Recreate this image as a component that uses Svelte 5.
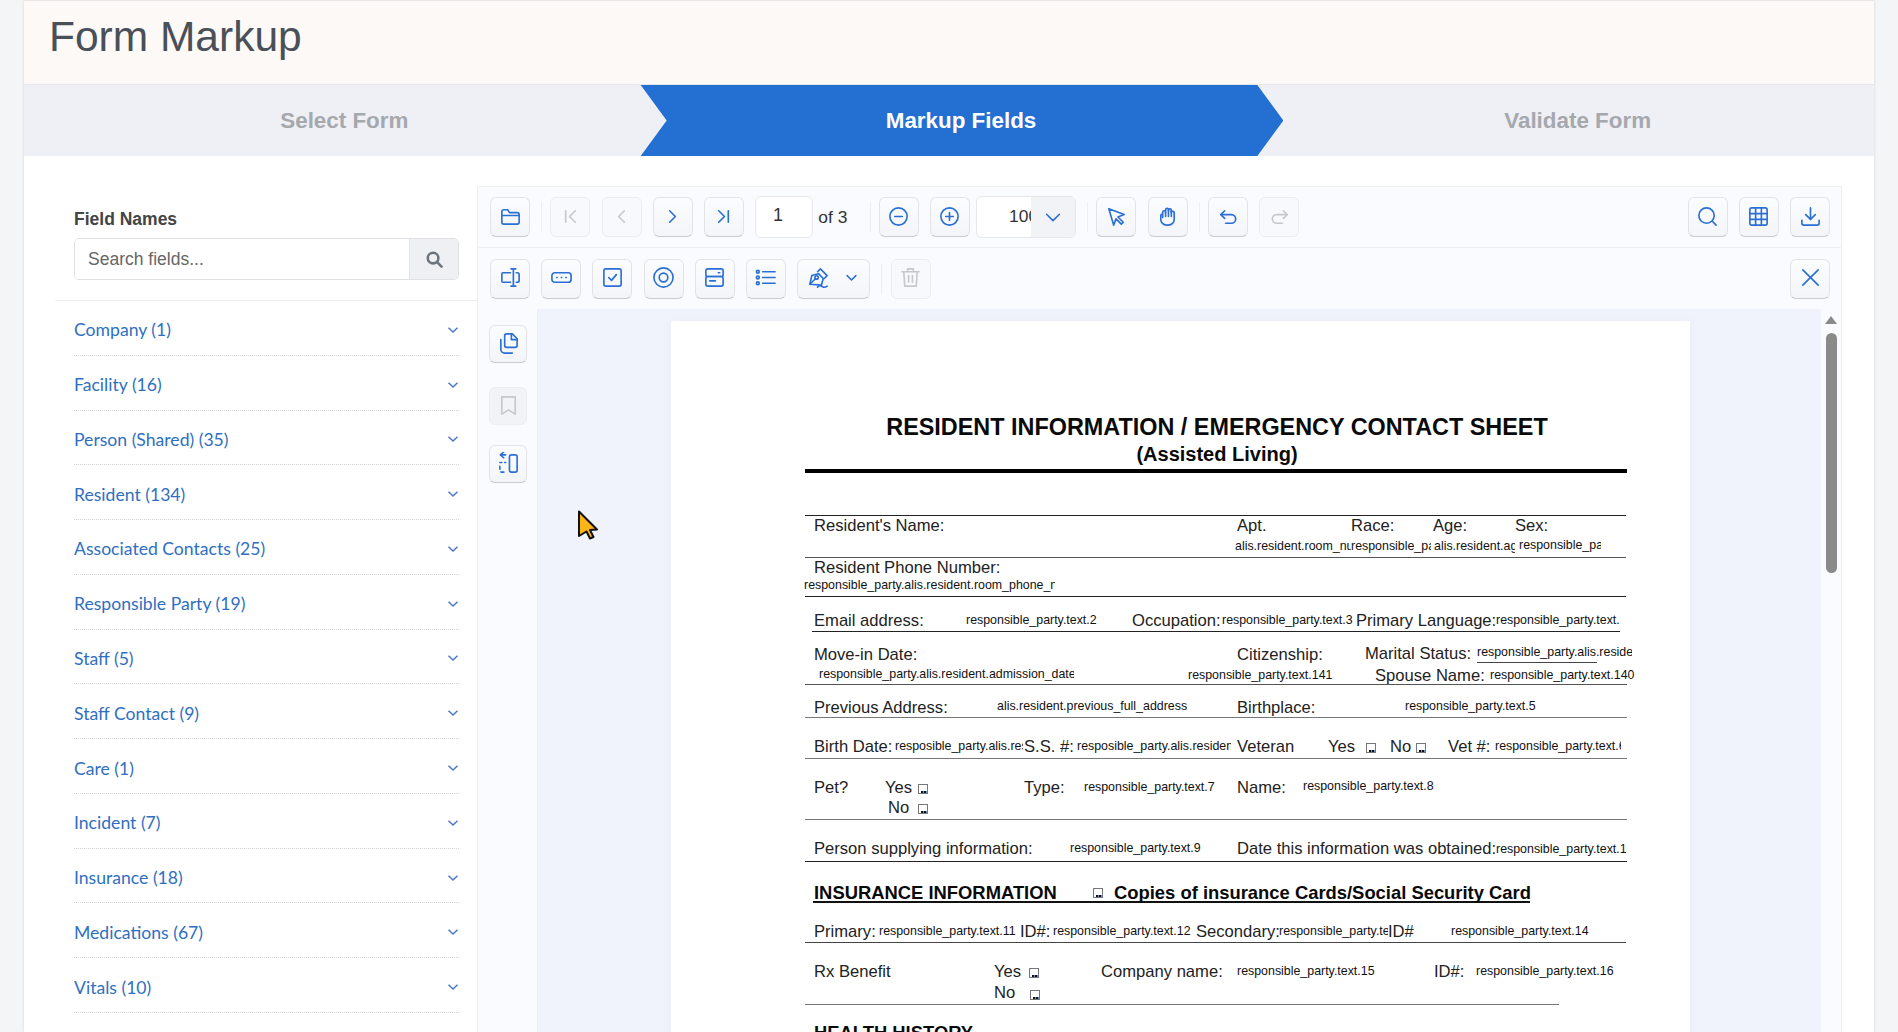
<script lang="ts">
  const PAGE_X = 671;
  const PAGE_Y = 321;

  const groups = [
    "Company (1)",
    "Facility (16)",
    "Person (Shared) (35)",
    "Resident (134)",
    "Associated Contacts (25)",
    "Responsible Party (19)",
    "Staff (5)",
    "Staff Contact (9)",
    "Care (1)",
    "Incident (7)",
    "Insurance (18)",
    "Medications (67)",
    "Vitals (10)",
  ];

  const icons: Record<string, string> = {
    folder: '<path d="M3 7a2 2 0 0 1 2-2h4l2 3h8a2 2 0 0 1 2 2v8a2 2 0 0 1-2 2H5a2 2 0 0 1-2-2z"/><path d="M3 11h18"/>',
    first: '<path d="M7 6v12"/><path d="M17 6l-6 6 6 6"/>',
    prev: '<path d="M15 6l-6 6 6 6"/>',
    next: '<path d="M9 6l6 6-6 6"/>',
    last: '<path d="M7 6l6 6-6 6"/><path d="M17 6v12"/>',
    minus: '<circle cx="12" cy="12" r="9"/><path d="M8 12h8"/>',
    plus: '<circle cx="12" cy="12" r="9"/><path d="M8 12h8"/><path d="M12 8v8"/>',
    down: '<path d="M5 9l7 7 7-7"/>',
    pointer: '<path d="M4 4l16 6-6.5 2.5L19 18l-2 2-5.5-5.5L9 21z"/>',
    hand: '<path d="M7 13V7.5a1.5 1.5 0 0 1 3 0V5a1.5 1.5 0 0 1 3 0v.5a1.5 1.5 0 0 1 3 0V8a1.5 1.5 0 0 1 3 0v7a6 6 0 0 1-6 6h-2a6 6 0 0 1-6-6v-4a1.5 1.5 0 0 1 2-1.4"/><path d="M10 7.5V12"/><path d="M13 5.5V12"/><path d="M16 6v6"/>',
    undo: '<path d="M8 6l-4 4 4 4"/><path d="M4 10h11a4.5 4.5 0 0 1 0 9H9"/>',
    redo: '<path d="M16 6l4 4-4 4"/><path d="M20 10H9a4.5 4.5 0 0 0 0 9h6"/>',
    search: '<circle cx="11" cy="11" r="8"/><path d="M17 17l4 4"/>',
    table: '<rect x="3" y="3" width="18" height="18" rx="2"/><path d="M3 9h18"/><path d="M3 15h18"/><path d="M9 3v18"/><path d="M15 3v18"/>',
    download: '<path d="M12 3v12"/><path d="M7 10l5 5 5-5"/><path d="M3 16v3a2 2 0 0 0 2 2h14a2 2 0 0 0 2-2v-3"/>',
    close: '<path d="M4 4l16 16"/><path d="M20 4L4 20"/>',
    textbox: '<path d="M12 7H4a1 1 0 0 0-1 1v8a1 1 0 0 0 1 1h8"/><path d="M18 7h1a2 2 0 0 1 2 2v6a2 2 0 0 1-2 2h-1"/><path d="M15 3v18"/><path d="M12.5 3h5"/><path d="M12.5 21h5"/>',
    dots: '<rect x="2" y="7" width="20" height="10" rx="3"/><path d="M7 12h.5"/><path d="M11.8 12h.5"/><path d="M16.5 12h.5"/>',
    check: '<rect x="3" y="3" width="18" height="18" rx="2"/><path d="M8 12l3 3 5-6"/>',
    radio: '<circle cx="12" cy="12" r="10"/><circle cx="12" cy="12" r="4.5"/>',
    combo: '<rect x="3" y="3" width="18" height="8" rx="2"/><rect x="3" y="11" width="18" height="10" rx="2"/><path d="M7 15.5h6"/><path d="M16 7h1.5"/>',
    list: '<circle cx="4" cy="6" r="1.5"/><circle cx="4" cy="12" r="1.5"/><circle cx="4" cy="18" r="1.5"/><path d="M9 6h13"/><path d="M9 12h13"/><path d="M9 18h13"/>',
    pen: '<path d="M3 19l2-9 7-2 5 5-2 7z"/><path d="M3 19l6-6"/><circle cx="10" cy="12" r="1.8"/><path d="M11 6l3-3 7 7-3 3"/><path d="M11 22c2-2 3-2 5-.5s3 1 5-.5"/>',
    trash: '<path d="M3 6h18"/><path d="M9 6V3h6v3"/><path d="M5 6l1 15h12l1-15"/><path d="M10 10v7"/><path d="M14 10v7"/>',
    pages: '<path d="M8 4a2 2 0 0 1 2-2h6l5 5v7a2 2 0 0 1-2 2h-9a2 2 0 0 1-2-2z"/><path d="M15 2v6h6"/><path d="M4 8v10a4 4 0 0 0 4 4h8"/>',
    bookmark: '<path d="M5 3h14v18l-7-4.5L5 21z"/>',
    panel: '<rect x="13" y="3" width="8" height="18" rx="2"/><path d="M9 3H4"/><path d="M7 1L3.5 4 7 7" transform="translate(0 -1)"/><path d="M3 11h2"/><path d="M8 11h1"/><path d="M3 15v4a2 2 0 0 0 2 2h4" stroke-dasharray="3 3"/>',
  };

  type Tool = { icon: string; off?: boolean };
  const pageNav: Tool[] = [
    { icon: "first", off: true },
    { icon: "prev", off: true },
    { icon: "next" },
    { icon: "last" },
  ];
  const fieldTools = ["textbox", "dots", "check", "radio", "combo", "list"];

  const lines = [
    { x: 805, y: 515, w: 821, h: 1, c: "#222" },
    { x: 805, y: 557, w: 821, h: 1, c: "#555" },
    { x: 805, y: 596, w: 821, h: 1, c: "#222" },
    { x: 812, y: 631, w: 808, h: 1, c: "#222" },
    { x: 1477, y: 662, w: 120, h: 1, c: "#444" },
    { x: 805, y: 684, w: 822, h: 1, c: "#555" },
    { x: 805, y: 717, w: 822, h: 1, c: "#777" },
    { x: 805, y: 758, w: 822, h: 1, c: "#777" },
    { x: 805, y: 819, w: 822, h: 1, c: "#777" },
    { x: 805, y: 861, w: 822, h: 1, c: "#222" },
    { x: 813, y: 901, w: 717, h: 2, c: "#111" },
    { x: 805, y: 942, w: 821, h: 1, c: "#444" },
    { x: 805, y: 1004, w: 754, h: 1, c: "#777" },
  ];

  // label text on the sheet: x, vertical centre, text
  const labels: [number, number, string][] = [
    [814, 526, "Resident's Name:"],
    [1237, 526, "Apt."],
    [1351, 526, "Race:"],
    [1433, 526, "Age:"],
    [1515, 526, "Sex:"],
    [814, 568, "Resident Phone Number:"],
    [814, 621, "Email address:"],
    [1132, 621, "Occupation:"],
    [1356, 621, "Primary Language:"],
    [814, 655, "Move-in Date:"],
    [1237, 655, "Citizenship:"],
    [1365, 654, "Marital Status:"],
    [1375, 676, "Spouse Name:"],
    [814, 708, "Previous Address:"],
    [1237, 708, "Birthplace:"],
    [814, 747, "Birth Date:"],
    [1024, 747, "S.S. #:"],
    [1237, 747, "Veteran"],
    [1328, 747, "Yes"],
    [1390, 747, "No"],
    [1448, 747, "Vet #:"],
    [814, 788, "Pet?"],
    [885, 788, "Yes"],
    [888, 808, "No"],
    [1024, 788, "Type:"],
    [1237, 788, "Name:"],
    [814, 849, "Person supplying information:"],
    [1237, 849, "Date this information was obtained:"],
    [814, 932, "Primary:"],
    [1020, 932, "ID#:"],
    [1196, 932, "Secondary:"],
    [1388, 932, "ID#"],
    [814, 972, "Rx Benefit"],
    [994, 972, "Yes"],
    [994, 993, "No"],
    [1101, 972, "Company name:"],
    [1434, 972, "ID#:"],
  ];

  // overlaid field names: x, vertical centre, text, clip width
  const fields: [number, number, string, number][] = [
    [1235, 546, "alis.resident.room_number", 116],
    [1351, 546, "responsible_party.alis", 80],
    [1434, 546, "alis.resident.age", 81],
    [1519, 545, "responsible_party.alis", 82],
    [804, 585, "responsible_party.alis.resident.room_phone_number", 251],
    [966, 620, "responsible_party.text.2", 150],
    [1222, 620, "responsible_party.text.3", 134],
    [1496, 620, "responsible_party.text.4", 123],
    [1477, 652, "responsible_party.alis.resident", 155],
    [819, 674, "responsible_party.alis.resident.admission_date", 255],
    [1188, 675, "responsible_party.text.141", 150],
    [1490, 675, "responsible_party.text.140", 145],
    [997, 706, "alis.resident.previous_full_address", 200],
    [1405, 706, "responsible_party.text.5", 150],
    [895, 746, "resposible_party.alis.resident", 128],
    [1077, 746, "resposible_party.alis.resident", 154],
    [1495, 746, "responsible_party.text.6", 126],
    [1084, 787, "responsible_party.text.7", 150],
    [1303, 786, "responsible_party.text.8", 150],
    [1070, 848, "responsible_party.text.9", 150],
    [1496, 849, "responsible_party.text.10", 130],
    [879, 931, "responsible_party.text.11", 140],
    [1053, 931, "responsible_party.text.12", 140],
    [1279, 931, "responsible_party.text.13", 109],
    [1451, 931, "responsible_party.text.14", 150],
    [1237, 971, "responsible_party.text.15", 150],
    [1476, 971, "responsible_party.text.16", 150],
  ];

  const boxes: [number, number][] = [
    [1366, 743],
    [1416, 743],
    [918, 784],
    [918, 804],
    [1093, 888],
    [1029, 968],
    [1030, 990],
  ];
</script>

{#snippet icon(name: string, size = 23)}
  <svg class="icon" width={size} height={size} viewBox="0 0 24 24" fill="none" stroke="currentColor" stroke-width="1.7" stroke-linecap="round" stroke-linejoin="round">
    {@html icons[name]}
  </svg>
{/snippet}

{#snippet tool(name: string, off = false)}
  <button class="tool" class:off>{@render icon(name)}</button>
{/snippet}

<div class="card">
  <header class="title-bar"><h1>Form Markup</h1></header>

  <nav class="stepper">
    <div class="step">Select Form</div>
    <div class="step active"><span>Markup Fields</span></div>
    <div class="step">Validate Form</div>
  </nav>

  <div class="body">
    <aside class="sidebar">
      <div class="search-block">
        <label for="field-search">Field Names</label>
        <div class="search">
          <input id="field-search" placeholder="Search fields..." />
          <button aria-label="Search">
            <svg width="17" height="17" viewBox="0 0 24 24" fill="none" stroke="#6c757d" stroke-width="3.6" stroke-linecap="round"><circle cx="10" cy="10" r="7.5" /><path d="M16 16l6 6" /></svg>
          </button>
        </div>
      </div>
      <ul class="groups">
        {#each groups as group}
          <li>
            <span>{group}</span>
            <svg width="12" height="12" viewBox="0 0 12 12" fill="none" stroke="#4a78c4" stroke-width="1.5"><path d="M1.5 3.8 6 8l4.5-4.2" /></svg>
          </li>
        {/each}
      </ul>
    </aside>

    <section class="viewer">
      <div class="toolbar">
        {@render tool("folder")}
        <i class="sep"></i>
        {#each pageNav as t}
          {@render tool(t.icon, t.off)}
        {/each}
        <div class="page-input">1</div>
        <span class="page-count">of 3</span>
        <i class="sep"></i>
        {@render tool("minus")}
        {@render tool("plus")}
        <div class="zoom-select">
          <span class="zoom-value"><span>100%</span></span>
          <span class="zoom-arrow">{@render icon("down", 22)}</span>
        </div>
        <i class="sep"></i>
        {@render tool("pointer")}
        {@render tool("hand")}
        <i class="sep"></i>
        {@render tool("undo")}
        {@render tool("redo", true)}
        <div class="push"></div>
        {@render tool("search")}
        {@render tool("table")}
        {@render tool("download")}
      </div>

      <div class="toolbar second">
        {#each fieldTools as t}
          {@render tool(t)}
        {/each}
        <button class="tool sign">
          {@render icon("pen")}
          <svg width="15" height="15" viewBox="0 0 24 24" fill="none" stroke="currentColor" stroke-width="2.4" stroke-linecap="round" stroke-linejoin="round"><path d="M5 9l7 7 7-7" /></svg>
        </button>
        <i class="sep"></i>
        {@render tool("trash", true)}
        <div class="push"></div>
        {@render tool("close")}
      </div>

      <div class="workspace">
        <div class="rail">
          {@render tool("pages")}
          {@render tool("bookmark", true)}
          {@render tool("panel")}
        </div>
        <div class="canvas">
          <article class="sheet">
            <h2>RESIDENT INFORMATION / EMERGENCY CONTACT SHEET</h2>
            <h3>(Assisted Living)</h3>
            <div class="rule"></div>
            {#each lines as l}
              <div class="line" style="left:{l.x - PAGE_X}px;top:{l.y - PAGE_Y}px;width:{l.w}px;height:{l.h}px;background:{l.c}"></div>
            {/each}
            {#each labels as [x, y, text]}
              <span class="label" style="left:{x - PAGE_X}px;top:{y - PAGE_Y - 10}px">{text}</span>
            {/each}
            {#each fields as [x, y, text, w]}
              <span class="field" style="left:{x - PAGE_X}px;top:{y - PAGE_Y - 10}px;width:{w}px">{text}</span>
            {/each}
            {#each boxes as [x, y]}
              <span class="box" style="left:{x - PAGE_X}px;top:{y - PAGE_Y}px"></span>
            {/each}
            <b class="heading" style="left:{814 - PAGE_X}px;top:{893 - PAGE_Y - 10}px">INSURANCE INFORMATION</b>
            <b class="heading" style="left:{1114 - PAGE_X}px;top:{893 - PAGE_Y - 10}px">Copies of insurance Cards/Social Security Card</b>
            <b class="heading" style="left:{814 - PAGE_X}px;top:{1033 - PAGE_Y - 10}px">HEALTH HISTORY</b>
          </article>
        </div>
        <div class="scrollbar">
          <i class="arrow"></i>
          <i class="thumb"></i>
        </div>
        <svg class="cursor" width="22" height="30" viewBox="0 0 22 30"><path d="M2 1.5 20 19.5l-7 .5 3.5 7-3.5 1.5-3.5-7L2 26z" fill="#fdb515" stroke="#111" stroke-width="2" stroke-linejoin="round" /></svg>
      </div>
    </section>
  </div>
</div>

<style>
  :global(html),
  :global(body) {
    height: 1032px;
    overflow: hidden;
    background: #f4f5f6;
  }

  .card {
    width: 1850px;
    height: 1032px;
    margin-left: 24px;
    overflow: hidden;
    background: #fff;
    box-shadow: 0 0 3px rgba(0, 0, 0, 0.12);
    font-family: "Liberation Sans", Arial, sans-serif;
  }

  .title-bar {
    height: 85px;
    box-sizing: border-box;
    border-top: 1px solid #e6e6e6;
    border-bottom: 1px solid #e6e7ea;
    background: #fdf9f7;
    padding-left: 25px;
  }

  h1 {
    margin: 0;
    font-size: 42.5px;
    font-weight: 400;
    line-height: 71px;
    color: #495057;
  }

  .stepper {
    display: flex;
    height: 71px;
    background: #eef0f5;
  }

  .step {
    position: relative;
    flex: 1;
    padding-left: 24px;
    font-size: 22.4px;
    font-weight: 700;
    line-height: 71px;
    text-align: center;
    color: #a5a8ad;
  }

  .step.active {
    color: #fff;
  }

  .step.active::before {
    content: "";
    position: absolute;
    inset: 0 -26px 0 0;
    background: #236fd2;
    clip-path: polygon(0 0, calc(100% - 26px) 0, 100% 50%, calc(100% - 26px) 100%, 0 100%, 26px 50%);
  }

  .step.active span {
    position: relative;
  }

  .body {
    display: flex;
    padding-top: 30px;
  }

  .sidebar {
    width: 422px;
    margin-left: 31px;
    flex: none;
  }

  .search-block {
    height: 115px;
    box-sizing: border-box;
    padding: 23px 18px 0 19px;
    border-bottom: 1px solid #eeeef0;
  }

  label {
    display: block;
    height: 29px;
    font-size: 17.5px;
    font-weight: 700;
    line-height: 20px;
    color: #444;
  }

  .search {
    display: flex;
    height: 42px;
    box-sizing: border-box;
    border: 1px solid #dee0e4;
    border-radius: 5px;
    overflow: hidden;
  }

  .search input {
    flex: 1;
    min-width: 0;
    padding: 0 13px;
    border: 0;
    outline: 0;
    font: 17.5px "Liberation Sans", Arial, sans-serif;
  }

  .search input::placeholder {
    color: #666;
    opacity: 1;
  }

  .search button {
    display: flex;
    align-items: center;
    justify-content: center;
    width: 49px;
    padding: 0;
    border: 0;
    border-left: 1px solid #e3e5e8;
    background: #eff0f3;
  }

  .groups {
    margin: 0;
    padding: 0 18px 0 19px;
    list-style: none;
  }

  .groups li {
    display: flex;
    align-items: center;
    justify-content: space-between;
    height: 54.78px;
    box-sizing: border-box;
    padding-top: 4px;
    border-bottom: 1px dotted #d4d4d4;
    font-family: Lato, sans-serif;
    font-size: 17.6px;
    color: #2f6fc2;
  }

  .viewer {
    width: 1365px;
    flex: none;
    box-sizing: border-box;
    border-left: 1px solid #ededf2;
    border-right: 1px solid #ededf2;
    border-top: 1px solid #f0f1f5;
    background: #fafbfe;
  }

  .toolbar {
    display: flex;
    align-items: center;
    gap: 11.2px;
    height: 61px;
    box-sizing: border-box;
    padding: 0 11px 0 12px;
    border-bottom: 1px solid #eff0f4;
  }

  .toolbar.second {
    border-bottom: 0;
  }

  .push {
    flex: 1;
  }

  .sep {
    width: 1px;
    height: 30px;
    margin-right: -3px;
    background: #eeeff3;
  }

  .tool {
    display: flex;
    align-items: center;
    justify-content: center;
    flex: none;
    width: 40px;
    height: 40px;
    padding: 0 0 2px;
    border: 1px solid #e2e3e9;
    border-bottom-color: #c9cad2;
    border-radius: 6px;
    background: linear-gradient(#fbfcfe, #f4f5f8);
    color: #2a6fd3;
  }

  .tool.off {
    border-color: #ecedf1;
    background: #f8f9fc;
    color: #c6c8cc;
  }

  .tool.sign {
    justify-content: flex-start;
    gap: 14px;
    width: 73px;
    padding-left: 9px;
  }

  .page-input {
    width: 58px;
    height: 42px;
    box-sizing: border-box;
    border: 1px solid #e6e7ec;
    border-radius: 6px;
    background: #fff;
    padding: 8px 12px 0 0;
    margin-right: -6px;
    font-size: 18px;
    line-height: 20px;
    text-align: center;
    color: #333;
  }

  .page-count {
    width: 40px;
    font-size: 17.4px;
    color: #333;
  }

  .zoom-select {
    display: flex;
    width: 100px;
    height: 42px;
    box-sizing: border-box;
    margin-left: -5px;
    border: 1px solid #e6e7ec;
    border-radius: 6px;
    overflow: hidden;
    background: #fff;
  }

  .zoom-value {
    width: 54px;
    overflow: hidden;
    padding-left: 32px;
    box-sizing: border-box;
    font-size: 17.4px;
    line-height: 38px;
    white-space: nowrap;
    color: #333;
  }

  .zoom-arrow {
    display: flex;
    flex: 1;
    align-items: center;
    justify-content: center;
    background: #f2f3f6;
    color: #2a6fd3;
  }

  .workspace {
    position: relative;
    display: flex;
    height: 723px;
  }

  .rail {
    display: flex;
    flex-direction: column;
    gap: 20px;
    width: 60px;
    flex: none;
    box-sizing: border-box;
    padding: 16px 0 0 11px;
    border-right: 1px solid #eeeff3;
  }

  .rail .tool {
    width: 38px;
    height: 38px;
  }

  .rail .tool.off {
    margin-top: 4px;
    background: #f2f3f6;
  }

  .canvas {
    flex: 1;
    padding: 12px 0 0 133px;
    overflow: hidden;
    background: #f0f3fb;
  }

  .sheet {
    position: relative;
    width: 1019px;
    height: 760px;
    background: #fff;
    box-shadow: 0 0 12px rgba(0, 0, 0, 0.03);
    color: #111;
  }

  h2,
  h3 {
    position: absolute;
    left: 0;
    width: 1092px;
    margin: 0;
    text-align: center;
    font-weight: 700;
    white-space: nowrap;
    color: #0a0a0a;
  }

  h2 {
    top: 92px;
    font-size: 23.4px;
    line-height: 28px;
  }

  h3 {
    top: 122px;
    font-size: 20px;
    line-height: 22px;
  }

  .rule {
    position: absolute;
    left: 134px;
    top: 148px;
    width: 822px;
    height: 4px;
    background: #000;
  }

  .line,
  .label,
  .field,
  .box,
  .heading {
    position: absolute;
  }

  .label {
    font-size: 16.6px;
    line-height: 20px;
    white-space: nowrap;
    color: #222;
  }

  .field {
    overflow: hidden;
    font-size: 12.4px;
    line-height: 20px;
    white-space: nowrap;
    color: #111;
  }

  .box {
    width: 8px;
    height: 8px;
    border: 1px solid #777;
  }

  .box::after {
    content: "";
    position: absolute;
    left: 2px;
    bottom: 0;
    width: 6px;
    height: 2px;
    background: repeating-linear-gradient(90deg, #111 0 2px, #6a8fd0 2px 3px);
  }

  .heading {
    font-size: 18.4px;
    line-height: 20px;
    white-space: nowrap;
    color: #0a0a0a;
  }

  .scrollbar {
    position: relative;
    width: 20px;
    flex: none;
    background: #fafbfe;
  }

  .arrow {
    position: absolute;
    left: 4px;
    top: 7px;
    border: 6px solid transparent;
    border-top: 0;
    border-bottom: 8px solid #8a8a8a;
  }

  .thumb {
    position: absolute;
    left: 5px;
    top: 24px;
    width: 11px;
    height: 240px;
    border-radius: 6px;
    background: #8a8a8a;
  }

  .cursor {
    position: absolute;
    left: 99px;
    top: 201px;
  }
</style>
